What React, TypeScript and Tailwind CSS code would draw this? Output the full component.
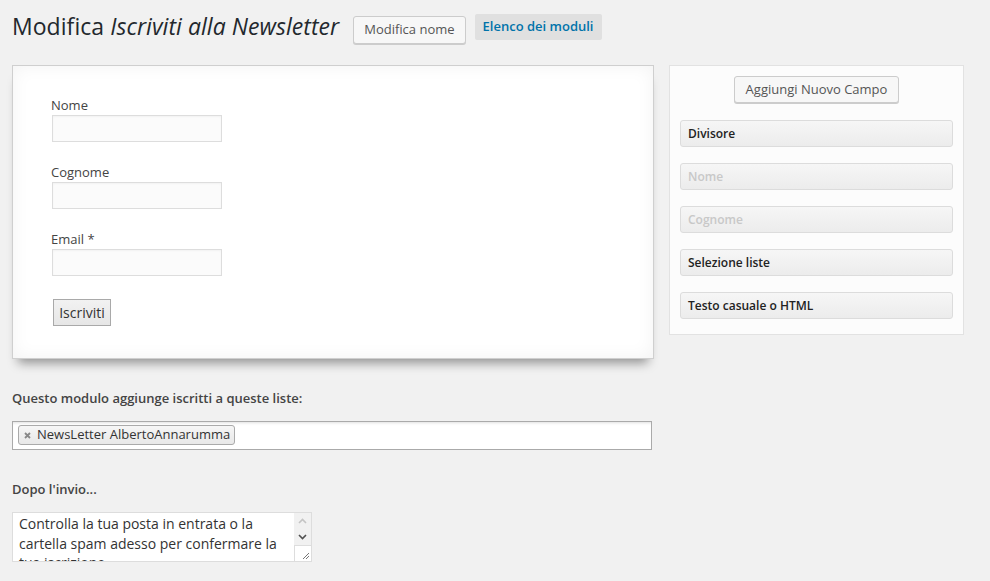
import React from "react";

function FieldBtn({ label, disabled }: { label: string; disabled?: boolean }) {
  return (
    <div
      className={
        "h-[27px] w-[273px] rounded-[3px] border border-[#dcdcdc] bg-gradient-to-b from-[#f6f6f6] to-[#ececec] pl-[7px] text-[12px] font-semibold leading-[25px] " +
        (disabled ? "text-[#c8c8c8]" : "text-[#222]")
      }
    >
      {label}
    </div>
  );
}

function Field({ label, first }: { label: string; first?: boolean }) {
  return (
    <div className={first ? "" : "mt-[20px]"}>
      <div className="h-[20px] text-[13px] leading-[20px] text-[#444] -ml-[1px]">{label}</div>
      <div className="h-[27px] w-[170px] border border-[#dddddd] bg-[#fbfbfb] shadow-[inset_0_1px_2px_rgba(0,0,0,0.04)]" />
    </div>
  );
}

export default function App() {
  return (
    <div className="min-h-[581px] w-[990px] bg-[#f1f1f1] px-[12px] font-['Open_Sans',sans-serif] text-[13px] text-[#444]">
      <div className="flex h-[44px] items-start">
        <h2 className="mt-[12px] whitespace-nowrap text-[23px] font-normal leading-[29px] tracking-[0.05px] text-[#23282d]">
          Modifica <em className="italic">Iscriviti alla Newsletter</em>
        </h2>
        <div className="ml-[14px] mt-[16px] flex h-[28px] items-center rounded-[3px] border border-[#cccccc] bg-[#f7f7f7] px-[10px] text-[13px] text-[#555] shadow-[0_1px_0_#cccccc]">
          Modifica nome
        </div>
        <div className="ml-[9px] mt-[14px] flex h-[26px] items-center rounded-[2px] bg-[#e0e0e0] px-[8px] text-[13px] font-semibold text-[#0073aa]">
          Elenco dei moduli
        </div>
      </div>

      <div className="mt-[21px] flex items-start gap-[15px]">
        <div className="h-[294px] w-[642px] border border-[#cfcfcf] bg-white pl-[39px] pt-[29px] shadow-[inset_0_0_18px_rgba(0,0,0,0.05),0_10px_10px_-6px_rgba(0,0,0,0.4)]">
          <Field label="Nome" first />
          <Field label="Cognome" />
          <Field label="Email *" />
          <div className="ml-[1px] mt-[23px] flex h-[27px] w-[58px] items-center justify-center border border-[#a9a9a9] bg-gradient-to-b from-[#f2f2f2] to-[#e6e6e6] text-[14px] text-[#333]">
            Iscriviti
          </div>
        </div>

        <div className="flex h-[270px] w-[295px] flex-col items-center border border-[#e2e2e2] bg-[#fcfcfc] px-[10px] pt-[10px]">
          <div className="flex h-[27px] items-center rounded-[3px] border border-[#cccccc] bg-[#f7f7f7] px-[11px] text-[13px] text-[#555] shadow-[0_1px_0_#cccccc]">
            Aggiungi Nuovo Campo
          </div>
          <div className="mt-[17px] flex flex-col gap-[16px]">
            <FieldBtn label="Divisore" />
            <FieldBtn label="Nome" disabled />
            <FieldBtn label="Cognome" disabled />
            <FieldBtn label="Selezione liste" />
            <FieldBtn label="Testo casuale o HTML" />
          </div>
        </div>
      </div>

      <div className="mt-[29px] h-[20px] text-[13px] font-semibold leading-[20px] text-[#444]">
        Questo modulo aggiunge iscritti a queste liste:
      </div>
      <div className="mt-[13px] flex h-[29px] w-[640px] items-start border border-[#aaaaaa] bg-white pl-[5px] pt-[3px] shadow-[inset_0_3px_3px_-2px_rgba(0,0,0,0.12)]">
        <div className="flex h-[20px] items-center whitespace-nowrap rounded-[3px] border border-[#aaaaaa] bg-gradient-to-b from-[#f6f6f6] to-[#e8e8e8] pl-[4px] pr-[4px] text-[13px] text-[#333]">
          <svg className="ml-[1px] mr-[6px]" width="7" height="7" viewBox="0 0 7 7">
            <path d="M1 1 L6 6 M6 1 L1 6" stroke="#888" strokeWidth="1.8" />
          </svg>
          NewsLetter AlbertoAnnarumma
        </div>
      </div>

      <div className="mt-[29px] h-[20px] text-[13px] font-semibold leading-[20px] text-[#444]">
        Dopo l'invio...
      </div>
      <div className="mt-[13px] flex h-[50px] w-[300px] overflow-hidden border border-[#dddddd] bg-white">
        <div className="h-[48px] flex-1 overflow-hidden pl-[6px] pt-[1px] text-[14px] leading-[19.5px] text-[#333]">
          Controlla la tua posta in entrata o la cartella spam adesso per confermare la tua iscrizione.
        </div>
        <div className="flex w-[17px] flex-col bg-[#f1f1f1]">
          <div className="flex h-[16px] items-center justify-center">
            <svg width="9" height="6" viewBox="0 0 9 6">
              <path d="M1 5 L4.5 1.5 L8 5" fill="none" stroke="#c4c4c4" strokeWidth="1.6" />
            </svg>
          </div>
          <div className="flex h-[16px] items-center justify-center">
            <svg width="9" height="6" viewBox="0 0 9 6">
              <path d="M1 1 L4.5 4.5 L8 1" fill="none" stroke="#505050" strokeWidth="1.6" />
            </svg>
          </div>
          <div className="relative flex-1 border-l border-t border-[#dddddd] bg-white">
            <svg className="absolute bottom-[1px] right-[1px]" width="8" height="8" viewBox="0 0 8 8">
              <path d="M7 1 L1 7 M7 4 L4 7" stroke="#777" strokeWidth="1" />
            </svg>
          </div>
        </div>
      </div>
    </div>
  );
}
